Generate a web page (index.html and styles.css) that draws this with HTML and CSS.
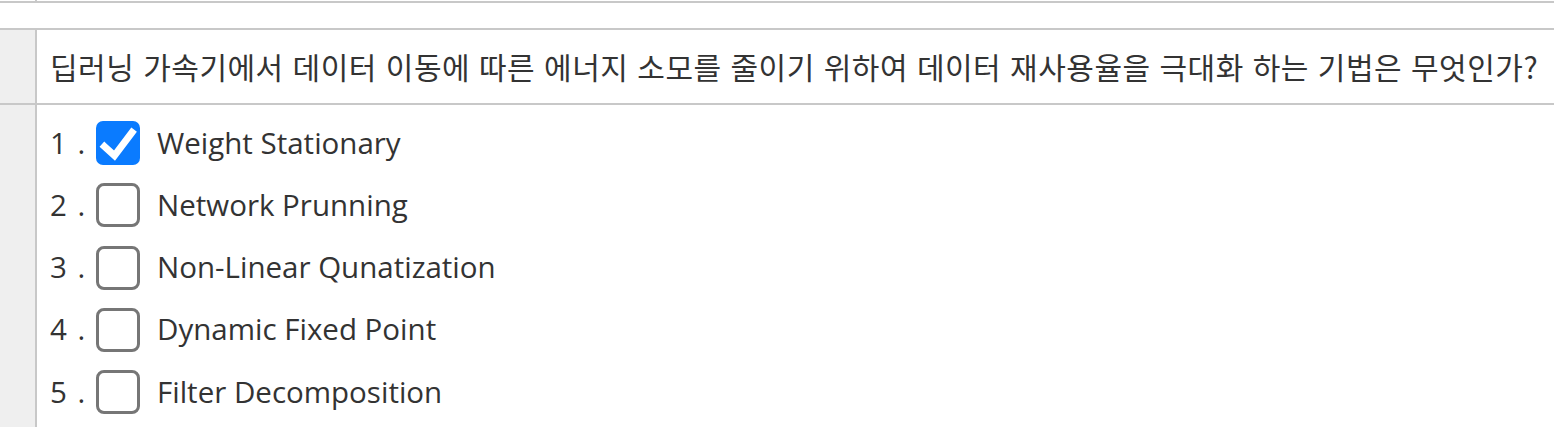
FILE: index.html
```html
<!DOCTYPE html>
<html lang="ko">
<head>
<meta charset="utf-8">
<link rel="stylesheet" href="styles.css">
</head>
<body>
<div class="prev">
  <div class="side"></div>
  <div class="main"></div>
</div>
<div class="quiz">
  <div class="row q-row">
    <div class="side"></div>
    <div class="main question">딥러닝 가속기에서 데이터 이동에 따른 에너지 소모를 줄이기 위하여 데이터 재사용율을 극대화 하는 기법은 무엇인가?</div>
  </div>
  <div class="row a-row">
    <div class="side"></div>
    <div class="main options">
      <div class="opt"><span class="num">1 .</span><span class="box checked"><svg viewBox="0 0 44 44" width="44" height="44"><path d="M8.5 25.5 L18.5 34.5 L36 11.5" fill="none" stroke="#fff" stroke-width="7" stroke-linecap="square" stroke-linejoin="miter"/></svg></span><span class="label">Weight Stationary</span></div>
      <div class="opt"><span class="num">2 .</span><span class="box"></span><span class="label">Network Prunning</span></div>
      <div class="opt"><span class="num">3 .</span><span class="box"></span><span class="label">Non-Linear Qunatization</span></div>
      <div class="opt"><span class="num">4 .</span><span class="box"></span><span class="label">Dynamic Fixed Point</span></div>
      <div class="opt"><span class="num">5 .</span><span class="box"></span><span class="label">Filter Decomposition</span></div>
    </div>
  </div>
</div>
</body>
</html>
```
FILE: styles.css
```css
html, body {
  margin: 0;
  padding: 0;
  background: #fff;
}
body {
  font-family: "Open Sans", "Noto Sans CJK KR", sans-serif;
  color: #333;
  overflow: hidden;
}
.prev {
  display: flex;
  height: 1px;
  border-bottom: 2px solid #c8c8c8;
}
.prev .side {
  width: 35px;
  border-right: 2px solid #c8c8c8;
}
.quiz {
  margin-top: 25px;
  border-top: 2px solid #c8c8c8;
}
.row {
  display: flex;
}
.side {
  width: 35px;
  flex: none;
  background: #efefef;
  border-right: 2px solid #c8c8c8;
}
.prev .side { background: #fff; }
.main {
  flex: 1;
  min-width: 0;
}
.q-row {
  height: 73px;
  border-bottom: 2px solid #c8c8c8;
}
.question {
  display: flex;
  align-items: center;
  padding-left: 13px;
  font-size: 30px;
  letter-spacing: 0.5px;
  white-space: nowrap;
  font-family: "Noto Sans CJK KR", sans-serif;
  padding-bottom: 2px;
}
.a-row {
  height: 330px;
}
.options {
  padding: 16px 0 0 13px;
  display: flex;
  flex-direction: column;
  gap: 18.3px;
}
.opt {
  display: flex;
  align-items: center;
  height: 44px;
  font-size: 29.5px;
}
.num {
  width: 46px;
  flex: none;
  word-spacing: 3px;
  padding-bottom: 2px;
}
.label {
  margin-left: 17px;
  padding-bottom: 2px;
}
.box {
  width: 44px;
  height: 44px;
  box-sizing: border-box;
  border: 3px solid #767676;
  border-radius: 8px;
  flex: none;
  display: flex;
}
.box.checked {
  background: #0a7bff;
  border: none;
  border-radius: 7px;
}
```
